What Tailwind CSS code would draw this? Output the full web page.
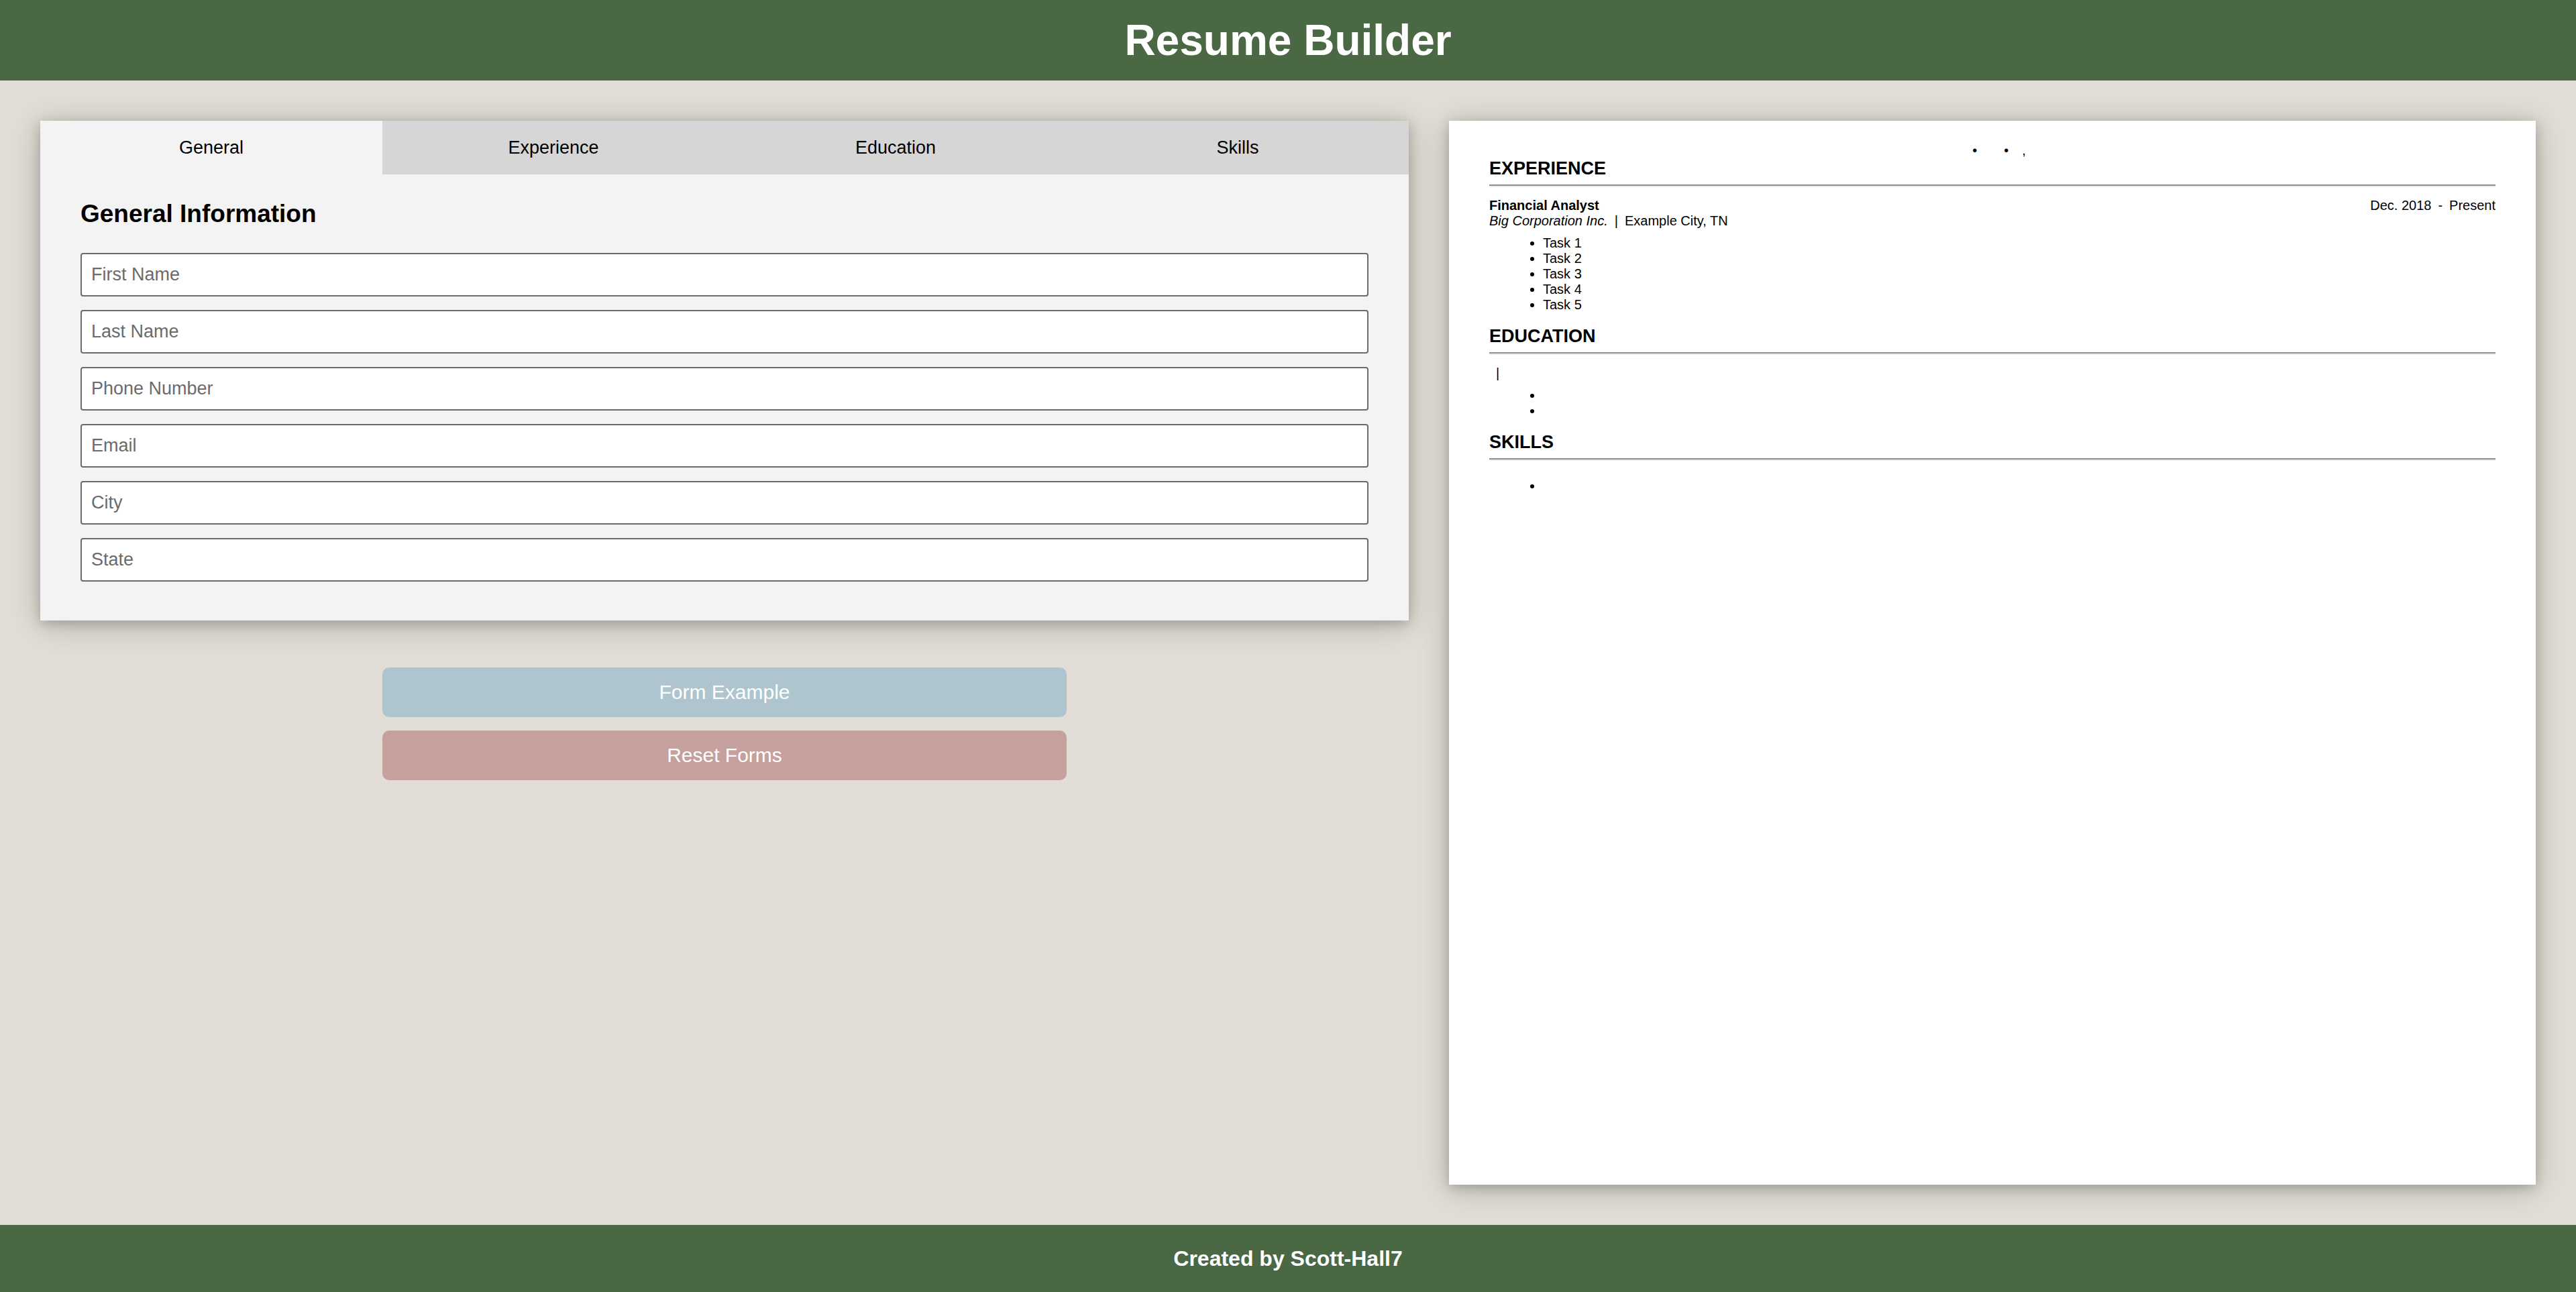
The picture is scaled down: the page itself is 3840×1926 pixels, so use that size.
<!DOCTYPE html>
<html lang="en">
<head>
<meta charset="utf-8">
<title>Resume Builder</title>
<script src="https://cdn.jsdelivr.net/npm/@tailwindcss/browser@4"></script>
</head>
<body class="min-h-screen flex flex-col bg-[#e2ddd6] text-black font-['Liberation_Sans',Arial,sans-serif]">
  <header class="bg-[#4a6843] py-6 text-center">
    <h1 class="text-[64px] leading-[72px] font-bold text-white">Resume Builder</h1>
  </header>

  <main class="grow grid grid-cols-[34fr_27fr] gap-[60px] p-[60px]">
    <div>
      <section class="bg-[#f3f3f3] shadow-[0_4px_16px_rgb(0_20_0/0.2),0_6px_44px_rgb(0_20_0/0.22)]">
        <nav class="grid grid-cols-4 text-[27px] leading-[32px]">
          <button type="button" class="py-6 bg-[#f3f3f3]">General</button>
          <button type="button" class="py-6 bg-[#d6d6d6]">Experience</button>
          <button type="button" class="py-6 bg-[#d6d6d6]">Education</button>
          <button type="button" class="py-6 bg-[#d6d6d6]">Skills</button>
        </nav>
        <form id="general" class="px-[60px] pt-[37px] pb-[58px]">
          <h2 class="text-[37px] leading-[44px] font-bold mb-9">General Information</h2>
          <div class="flex flex-col gap-5 text-[27px] leading-[31px]">
            <input type="text" aria-label="First Name" placeholder="First Name" class="h-[65px] px-[14px] bg-white border-2 border-[#6b6b6b] rounded-[4px] placeholder:text-[#6b6b6b]">
            <input type="text" aria-label="Last Name" placeholder="Last Name" class="h-[65px] px-[14px] bg-white border-2 border-[#6b6b6b] rounded-[4px] placeholder:text-[#6b6b6b]">
            <input type="tel" aria-label="Phone Number" placeholder="Phone Number" class="h-[65px] px-[14px] bg-white border-2 border-[#6b6b6b] rounded-[4px] placeholder:text-[#6b6b6b]">
            <input type="email" aria-label="Email" placeholder="Email" class="h-[65px] px-[14px] bg-white border-2 border-[#6b6b6b] rounded-[4px] placeholder:text-[#6b6b6b]">
            <input type="text" aria-label="City" placeholder="City" class="h-[65px] px-[14px] bg-white border-2 border-[#6b6b6b] rounded-[4px] placeholder:text-[#6b6b6b]">
            <input type="text" aria-label="State" placeholder="State" class="h-[65px] px-[14px] bg-white border-2 border-[#6b6b6b] rounded-[4px] placeholder:text-[#6b6b6b]">
          </div>
        </form>
      </section>

      <div class="w-1/2 mx-auto mt-[70px] flex flex-col gap-5 text-[30px] leading-[34px] text-white">
        <button type="button" class="py-5 bg-[#aec5cf] rounded-[10px]">Form Example</button>
        <button type="reset" form="general" class="py-5 bg-[#c6a09d] rounded-[10px]">Reset Forms</button>
      </div>
    </div>

    <article class="bg-white px-[60px] pt-8 pb-[60px] text-[20px] leading-[23px] shadow-[0_4px_16px_rgb(0_20_0/0.2),0_6px_44px_rgb(0_20_0/0.22)]">
      <!-- Contact line: phone • email • city, state -->
      <div class="flex justify-center gap-5 leading-[24px]">
        <span></span><span>•</span><span></span><span>•</span><span>,</span>
      </div>

      <section>
        <h2 class="text-[27px] leading-[30px] font-bold">EXPERIENCE</h2>
        <hr class="h-1 mt-[9px] mb-4 border-t-2 border-[#909090] bg-[#ededed]">
        <div class="flex justify-between">
          <h3 class="font-bold">Financial Analyst</h3>
          <p class="flex gap-[10px]"><span>Dec. 2018</span><span>-</span><span>Present</span></p>
        </div>
        <p class="flex gap-[10px]"><em>Big Corporation Inc.</em><span>|</span><span>Example City, TN</span></p>
        <ul class="mt-[10px] pl-20 list-disc">
          <li>Task 1</li>
          <li>Task 2</li>
          <li>Task 3</li>
          <li>Task 4</li>
          <li>Task 5</li>
        </ul>
      </section>

      <section class="mt-5">
        <h2 class="text-[27px] leading-[30px] font-bold">EDUCATION</h2>
        <hr class="h-1 mt-[9px] mb-4 border-t-2 border-[#909090] bg-[#ededed]">
        <p class="flex gap-[10px]"><em></em><span>|</span><span></span></p>
        <ul class="mt-[10px] pl-20 list-disc">
          <li>&nbsp;</li>
          <li>&nbsp;</li>
        </ul>
      </section>

      <section class="mt-5">
        <h2 class="text-[27px] leading-[30px] font-bold">SKILLS</h2>
        <hr class="h-1 mt-[9px] mb-4 border-t-2 border-[#909090] bg-[#ededed]">
        <ul class="mt-[26px] pl-20 list-disc">
          <li>&nbsp;</li>
        </ul>
      </section>
    </article>
  </main>

  <footer class="bg-[#4a6843] py-8 text-center">
    <p class="text-[32px] leading-[36px] font-bold text-white">Created by Scott-Hall7</p>
  </footer>
</body>
</html>
